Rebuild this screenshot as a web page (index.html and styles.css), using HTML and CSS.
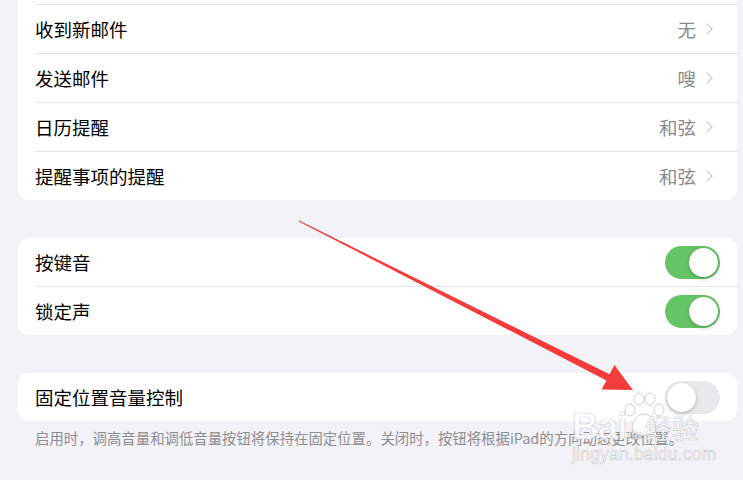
FILE: index.html
```html
<!DOCTYPE html>
<html lang="zh-CN">
<head>
  <meta charset="UTF-8">
  <title>声音</title>
  <link rel="stylesheet" href="styles.css">
</head>
<body>
  <div class="page">
    <div class="group group-top">
      <div class="row"></div>
      <div class="row"><span class="label">收到新邮件</span><span class="value">无</span><span class="chev"></span></div>
      <div class="row"><span class="label">发送邮件</span><span class="value">嗖</span><span class="chev"></span></div>
      <div class="row"><span class="label">日历提醒</span><span class="value">和弦</span><span class="chev"></span></div>
      <div class="row"><span class="label">提醒事项的提醒</span><span class="value">和弦</span><span class="chev"></span></div>
    </div>

    <div class="group">
      <div class="row"><span class="label">按键音</span><span class="switch on"></span></div>
      <div class="row"><span class="label">锁定声</span><span class="switch on"></span></div>
    </div>

    <div class="group">
      <div class="row"><span class="label">固定位置音量控制</span><span class="switch"></span></div>
    </div>
    <p class="note">启用时，调高音量和调低音量按钮将保持在固定位置。关闭时，按钮将根据iPad的方向动态更改位置。</p>
  </div>

  <svg class="arrow" width="743" height="480" viewBox="0 0 743 480">
    <polygon fill="#f53c3c" points="299.2,220.6 609.6,374.3 614.4,365 633,390 601.6,389.4 606.4,380.5 298.8,221.4"/>
  </svg>

  <div class="watermark">
    <svg class="paw" width="52" height="46" viewBox="0 0 52 46">
      <g fill="rgba(255,255,255,0.75)" stroke="rgba(170,170,170,0.55)" stroke-width="1">
        <ellipse cx="12" cy="18" rx="5" ry="6"/>
        <ellipse cx="21" cy="7" rx="5" ry="6"/>
        <ellipse cx="32" cy="7" rx="5" ry="6"/>
        <ellipse cx="41" cy="18" rx="5" ry="6"/>
        <path d="M26 22 C18 22 12 34 15 40 C18 45 34 45 37 40 C40 34 34 22 26 22 Z"/>
      </g>
    </svg>
    <div class="wm-line"><span class="wm-bai">Bai</span><span class="wm-du">du</span><span class="wm-jy">经验</span></div>
    <div class="wm-url">jingyan.baidu.com</div>
  </div>
</body>
</html>
```

FILE: styles.css
```css
body {
  margin: 0;
  background: #f2f2f7;
  font-family: "Noto Sans CJK SC", "Noto Sans", sans-serif;
  color: #000;
  overflow: hidden;
}
.page {
  padding: 0 6px 0 18px;
}
.group {
  background: #fff;
  border-radius: 11px;
  margin-top: 38px;
  overflow: hidden;
}
.group-top {
  margin-top: -44px;
}
.row {
  display: flex;
  align-items: center;
  height: 48px;
  margin-left: 17px;
  padding-right: 17px;
  border-bottom: 1px solid #e2e2e5;
  font-size: 18.5px;
}
.row:last-child {
  border-bottom: none;
}
.label {
  flex: 1;
}
.value {
  color: #8a8a8e;
  margin-right: 7px;
}
.chev {
  width: 7px;
  height: 7px;
  border-top: 1.5px solid #c4c4c8;
  border-right: 1.5px solid #c4c4c8;
  transform: rotate(45deg);
  margin-right: 9px;
}
.switch {
  position: relative;
  width: 55px;
  height: 33px;
  border-radius: 17px;
  background: #e9e9eb;
}
.switch::after {
  content: "";
  position: absolute;
  top: 2px;
  left: 2px;
  width: 29px;
  height: 29px;
  border-radius: 50%;
  background: #fff;
  box-shadow: 0 2px 5px rgba(0,0,0,0.18), 0 0 1px rgba(0,0,0,0.15);
}
.switch.on {
  background: #65c466;
}
.switch.on::after {
  left: 24px;
}
.note {
  margin: 8px 0 0 17px;
  font-size: 14.4px;
  line-height: 18px;
  color: #8d8d92;
}
.arrow {
  position: absolute;
  top: 0;
  left: 0;
}
.watermark {
  position: absolute;
  left: 572px;
  top: 392px;
  width: 140px;
  color: rgba(255,255,255,0.85);
  -webkit-text-stroke: 0.6px rgba(160,160,160,0.55);
  font-family: "Liberation Sans", sans-serif;
}
.paw {
  position: absolute;
  left: 46px;
  top: 0;
}
.wm-line {
  position: relative;
  margin-top: 14px;
  display: flex;
  align-items: baseline;
  white-space: nowrap;
}
.wm-bai {
  font-size: 37px;
  font-weight: bold;
  letter-spacing: -1px;
}
.wm-du {
  font-size: 13px;
  margin-left: 1px;
}
.wm-jy {
  font-family: "Noto Sans CJK SC", sans-serif;
  font-size: 27px;
  margin-left: 3px;
}
.wm-url {
  margin-top: -4px;
  font-size: 17.5px;
  letter-spacing: 0.2px;
}
```
